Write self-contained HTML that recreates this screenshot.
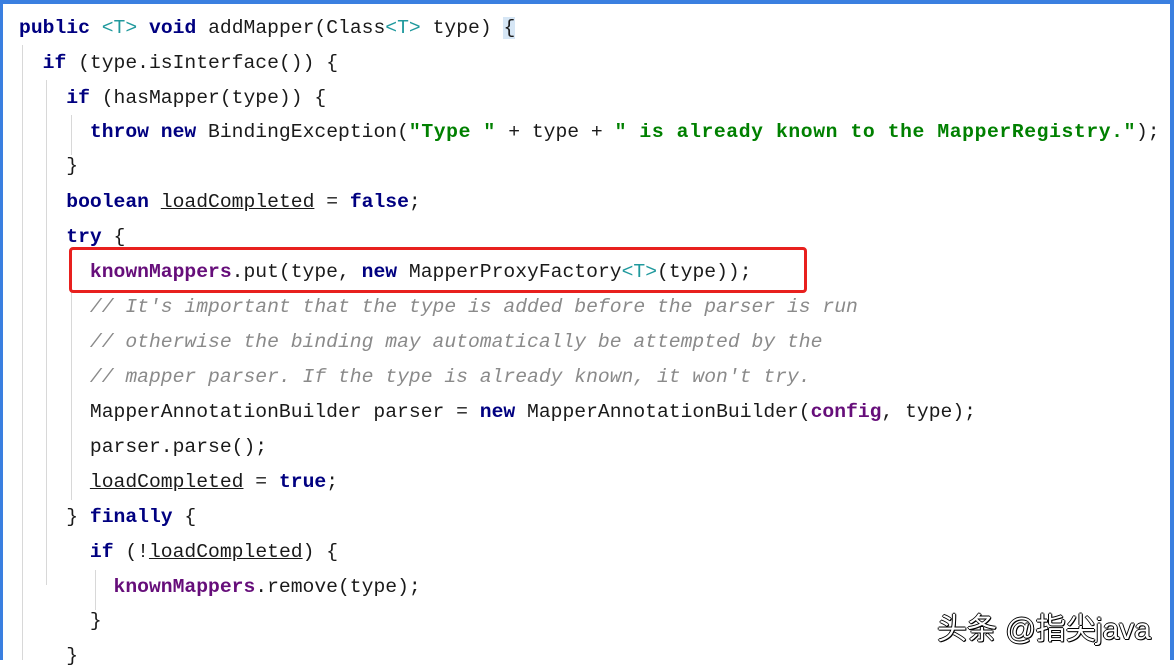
<!DOCTYPE html>
<html><head><meta charset="utf-8"><style>
html,body{margin:0;padding:0}
body{width:1174px;height:660px;overflow:hidden;background:#fff;position:relative;font-family:"Liberation Mono","Noto Sans CJK SC",monospace}
.frame{position:absolute;left:0;top:0;width:1174px;height:660px;box-sizing:border-box;border-top:4px solid #3a7fe0;border-left:3px solid #3a7fe0;border-right:4px solid #3a7fe0}
.l{position:absolute;left:19px;white-space:pre;font-size:19.7px;line-height:24px;color:#1a1a1a}
.k{color:#000080;font-weight:bold}
.t{color:#20999d}
.s{color:#008000;font-weight:bold;letter-spacing:0.6px}
.c{color:#8a8a8a;font-style:italic}
.p{color:#660e7a;font-weight:bold}
.u{text-decoration:underline}
.g{position:absolute;width:1px;background:#d8d8d8}
.box{position:absolute;left:69px;top:247px;width:738px;height:46px;box-sizing:border-box;border:3px solid #e8201e;border-radius:4px}
.wm{position:absolute;left:937px;top:604px;font-family:"Liberation Sans","Noto Sans CJK SC",sans-serif;font-size:30px;color:#fff;text-shadow:1px 1px 0 #000,-1px 0 0 #000,0 -1px 0 #000,1px 0 0 #000,0 1px 0 #000}
</style></head><body>
<div class="frame"></div>
<div class="g" style="left:22px;top:45px;height:615px"></div>
<div class="g" style="left:46px;top:80px;height:505px"></div>
<div class="g" style="left:71px;top:115px;height:40px"></div>
<div class="g" style="left:71px;top:255px;height:245px"></div>
<div class="g" style="left:95px;top:570px;height:40px"></div>
<div class="l" style="top:16px"><span class="k">public</span> <span class="t">&lt;T&gt;</span> <span class="k">void</span> addMapper(Class<span class="t">&lt;T&gt;</span> type) <span style="background:#d6e6f5">{</span></div>
<div class="l" style="top:51px">  <span class="k">if</span> (type.isInterface()) {</div>
<div class="l" style="top:86px">    <span class="k">if</span> (hasMapper(type)) {</div>
<div class="l" style="top:120px">      <span class="k">throw new</span> BindingException(<span class="s">"Type " </span>+ type + <span class="s">" is already known to the MapperRegistry."</span>);</div>
<div class="l" style="top:154px">    }</div>
<div class="l" style="top:190px">    <span class="k">boolean</span> <span class="u">loadCompleted</span> = <span class="k">false</span>;</div>
<div class="l" style="top:225px">    <span class="k">try</span> {</div>
<div class="l" style="top:260px">      <span class="p">knownMappers</span>.put(type, <span class="k">new</span> MapperProxyFactory<span class="t">&lt;T&gt;</span>(type));</div>
<div class="l" style="top:295px">      <span class="c">// It's important that the type is added before the parser is run</span></div>
<div class="l" style="top:330px">      <span class="c">// otherwise the binding may automatically be attempted by the</span></div>
<div class="l" style="top:365px">      <span class="c">// mapper parser. If the type is already known, it won't try.</span></div>
<div class="l" style="top:400px">      MapperAnnotationBuilder parser = <span class="k">new</span> MapperAnnotationBuilder(<span class="p">config</span>, type);</div>
<div class="l" style="top:435px">      parser.parse();</div>
<div class="l" style="top:470px">      <span class="u">loadCompleted</span> = <span class="k">true</span>;</div>
<div class="l" style="top:505px">    } <span class="k">finally</span> {</div>
<div class="l" style="top:540px">      <span class="k">if</span> (!<span class="u">loadCompleted</span>) {</div>
<div class="l" style="top:575px">        <span class="p">knownMappers</span>.remove(type);</div>
<div class="l" style="top:609px">      }</div>
<div class="l" style="top:644px">    }</div>
<div class="box"></div>
<div class="wm">头条 @指尖java</div>
</body></html>
